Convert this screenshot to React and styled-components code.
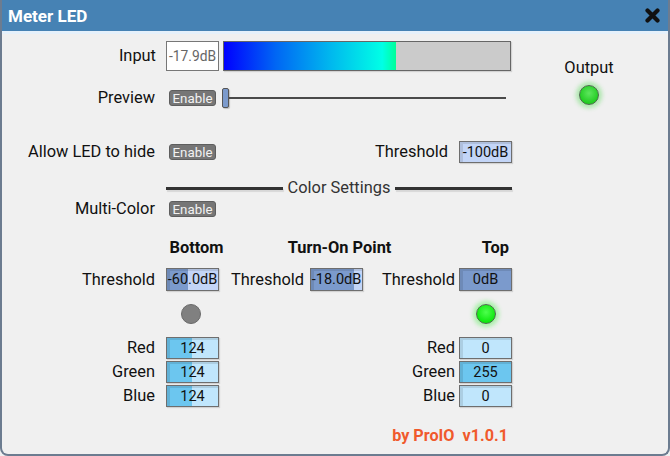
import React from "react";
import styled, { createGlobalStyle } from "styled-components";

const Global = createGlobalStyle`
  html, body { margin: 0; padding: 0; background: #f0f0f0; }
  body { font-family: Roboto, "Liberation Sans", sans-serif; }
`;

const App = () => {
  return (
    <Window>
      <Global />
      <TitleBar>
        <Title>Meter LED</Title>
        <CloseBtn aria-label="close">
          <svg width="15" height="15" viewBox="0 0 15 15">
            <path d="M2.5 2.5 L12.5 12.5 M12.5 2.5 L2.5 12.5" stroke="#111" strokeWidth="4.2" strokeLinecap="round" />
          </svg>
        </CloseBtn>
      </TitleBar>
      <Strip />
      <Body>
        <TopSection>
          <LeftCol>
            <Row h={30} mt={7}>
              <Label w={164} pr={10}>Input</Label>
              <InputValue>-17.9dB</InputValue>
              <Meter>
                <MeterFill style={{ width: "60%" }} />
              </Meter>
            </Row>
            <Row h={20} mt={17}>
              <Label w={164} pr={11}>Preview</Label>
              <EnableBtn>Enable</EnableBtn>
              <Slider>
                <Thumb />
                <Track />
              </Slider>
            </Row>
            <Row h={22} mt={33}>
              <Label w={164} pr={11}>Allow LED to hide</Label>
              <EnableBtn>Enable</EnableBtn>
              <Spacer />
              <Label pr={11}>Threshold</Label>
              <FillBox tone="blue" pct={0} h={22}>-100dB</FillBox>
            </Row>
          </LeftCol>
          <OutputCol>
            <OutLabel>Output</OutLabel>
            <Led on="output" />
          </OutputCol>
        </TopSection>

        <Separator>
          <SepLine />
          <SepText>Color Settings</SepText>
          <SepLine />
        </Separator>
        <Row h={18} mt={3}>
          <Label w={164} pr={11}>Multi-Color</Label>
          <EnableBtn>Enable</EnableBtn>
        </Row>

        <GridRow h={18} mt={21}>
          <span />
          <Header shift={8}>Bottom</Header>
          <span />
          <Header shift={6}>Turn-On Point</Header>
          <span />
          <Header align="end">Top</Header>
        </GridRow>
        <GridRow h={23} mt={11}>
          <Label pr={11}>Threshold</Label>
          <FillBox tone="blue" pct={41} h={23}>-60.0dB</FillBox>
          <Label pr={6}>Threshold</Label>
          <FillBox tone="blue" pct={85} h={23}>-18.0dB</FillBox>
          <Label pr={4}>Threshold</Label>
          <FillBox tone="blue" pct={100} h={23}>0dB</FillBox>
        </GridRow>
        <GridRow h={20} mt={13}>
          <span />
          <LedCell shift={-3}><Led on="off" /></LedCell>
          <span />
          <span />
          <span />
          <LedCell><Led on="top" /></LedCell>
        </GridRow>
        {[
          ["Red", 124, 0],
          ["Green", 124, 255],
          ["Blue", 124, 0],
        ].map(([name, lo, hi], i) => (
          <GridRow key={name} h={22} mt={i === 0 ? 13 : 2}>
            <Label pr={11}>{name}</Label>
            <FillBox tone="cyan" pct={(lo / 255) * 100} h={22}>{lo}</FillBox>
            <span />
            <span />
            <Label pr={4}>{name}</Label>
            <FillBox tone="cyan" pct={(hi / 255) * 100} h={22}>{hi}</FillBox>
          </GridRow>
        ))}
        <Footer>by ProIO  v1.0.1</Footer>
      </Body>
    </Window>
  );
};

export default App;

const Window = styled.div`
  width: 670px;
  height: 456px;
  box-sizing: border-box;
  border: 2px solid #6c7c90;
  border-top: none;
  border-radius: 0 0 8px 8px;
  background: #f0f0f0;
  overflow: hidden;
  color: #111;
  font-size: 16.4px;
`;
const TitleBar = styled.div`
  height: 31px;
  background: #4682b4;
  display: flex;
  align-items: center;
  justify-content: space-between;
  padding: 0 8px 0 6px;
`;
const Title = styled.div`
  color: #fff;
  font-weight: bold;
  font-size: 17px;
`;
const CloseBtn = styled.div`
  display: flex;
`;
const Strip = styled.div`
  height: 3px;
  background: #e6f1fb;
`;
const Body = styled.div`
  display: flex;
  flex-direction: column;
`;
const TopSection = styled.div`
  display: flex;
`;
const LeftCol = styled.div`
  width: 510px;
  display: flex;
  flex-direction: column;
`;
const OutputCol = styled.div`
  width: 60px;
  margin-left: 47px;
  padding-top: 25px;
  display: flex;
  flex-direction: column;
  align-items: center;
`;
const OutLabel = styled.div`
  line-height: 18px;
  margin-bottom: 8px;
`;
const Row = styled.div`
  display: flex;
  align-items: center;
  height: ${(p) => p.h}px;
  margin-top: ${(p) => p.mt}px;
`;
const Label = styled.div`
  ${(p) => (p.w ? `width: ${p.w}px; flex-shrink: 0;` : "")}
  box-sizing: border-box;
  text-align: right;
  padding-right: ${(p) => p.pr || 0}px;
  line-height: 18px;
  white-space: nowrap;
`;
const Spacer = styled.div`
  flex: 1;
`;
const InputValue = styled.div`
  width: 53px;
  height: 30px;
  box-sizing: border-box;
  border: 1px solid #777;
  background: #fff;
  color: #666;
  font-size: 13.8px;
  display: flex;
  align-items: center;
  justify-content: center;
`;
const Meter = styled.div`
  width: 288px;
  height: 30px;
  box-sizing: border-box;
  margin-left: 4px;
  border: 1px solid #666;
  background: #cbcbcb;
  box-shadow: 1px 1px 1px rgba(0, 0, 0, 0.12);
`;
const MeterFill = styled.div`
  height: 100%;
  background: linear-gradient(90deg, #0000ff 0%, #0066f4 30%, #00b8ee 62%, #00ffe6 92%, #00ff99 100%);
`;
const EnableBtn = styled.div`
  width: 47px;
  height: 16px;
  box-sizing: border-box;
  margin-left: 3px;
  border-radius: 3px;
  border: 1px solid #5e5e5e;
  background: #767676;
  color: #f2f2f2;
  font-size: 13.3px;
  display: flex;
  align-items: center;
  justify-content: center;
`;
const Slider = styled.div`
  display: flex;
  align-items: center;
  margin-left: 6px;
  width: 284px;
`;
const Thumb = styled.div`
  width: 7px;
  height: 20px;
  box-sizing: border-box;
  border: 1px solid #555;
  border-radius: 2px;
  background: #7b9acc;
  box-shadow: 1px 1px 1px rgba(0, 0, 0, 0.2);
`;
const Track = styled.div`
  flex: 1;
  height: 2px;
  background: #4a4a4a;
`;
const Separator = styled.div`
  display: flex;
  align-items: center;
  gap: 5px;
  height: 18px;
  margin-top: 16px;
  margin-left: 164px;
  width: 346px;
`;
const SepLine = styled.div`
  flex: 1;
  height: 3px;
  background: #333;
  box-shadow: 1px 2px 1px rgba(0, 0, 0, 0.1);
`;
const SepText = styled.div`
  color: #333;
  line-height: 18px;
`;
const GridRow = styled.div`
  display: grid;
  grid-template-columns: 164px 53px 91px 53px 96px 53px;
  align-items: center;
  height: ${(p) => p.h}px;
  margin-top: ${(p) => p.mt}px;
`;
const Header = styled.div`
  font-weight: bold;
  line-height: 18px;
  white-space: nowrap;
  justify-self: ${(p) => (p.align === "end" ? "end" : "center")};
  padding-right: ${(p) => (p.align === "end" ? 3 : 0)}px;
  margin-left: ${(p) => p.shift || 0}px;
`;
const tones = {
  blue: { dark: "#7b9acc", light: "#c3d5f7" },
  cyan: { dark: "#6cc6ef", light: "#c0e6fc" },
};
const FillBox = styled.div`
  height: ${(p) => p.h}px;
  box-sizing: border-box;
  border: 1px solid #6e6e6e;
  background: linear-gradient(
    90deg,
    ${(p) => tones[p.tone].dark} ${(p) => p.pct}%,
    ${(p) => tones[p.tone].light} ${(p) => p.pct}%
  );
  box-shadow: inset 3px 2px 0 rgba(0, 0, 0, 0.1), 1px 1px 1px rgba(0, 0, 0, 0.12);
  width: 53px;
  font-size: 14.5px;
  color: #111;
  display: flex;
  align-items: center;
  justify-content: center;
`;
const LedCell = styled.div`
  display: flex;
  justify-content: center;
  margin-left: ${(p) => p.shift || 0}px;
`;
const leds = {
  off: "background: #808080; border-color: #6a6a6a;",
  output:
    "background: radial-gradient(circle at 50% 40%, #5ee65e, #22cc22 70%); border-color: #4a6a4a; box-shadow: 0 0 4px 3px rgba(90, 220, 90, 0.45);",
  top:
    "background: radial-gradient(circle at 50% 40%, #4dff4d, #0ee80e 70%); border-color: #4a6a4a; box-shadow: 0 0 4px 3px rgba(80, 240, 80, 0.45);",
};
const Led = styled.div`
  width: 20px;
  height: 20px;
  box-sizing: border-box;
  border-radius: 50%;
  border: 1px solid #666;
  ${(p) => leds[p.on]}
`;
const Footer = styled.div`
  width: 506px;
  margin-top: 20px;
  text-align: right;
  white-space: pre;
  color: #f05a2c;
  font-weight: bold;
  font-size: 16.2px;
  line-height: 18px;
`;
